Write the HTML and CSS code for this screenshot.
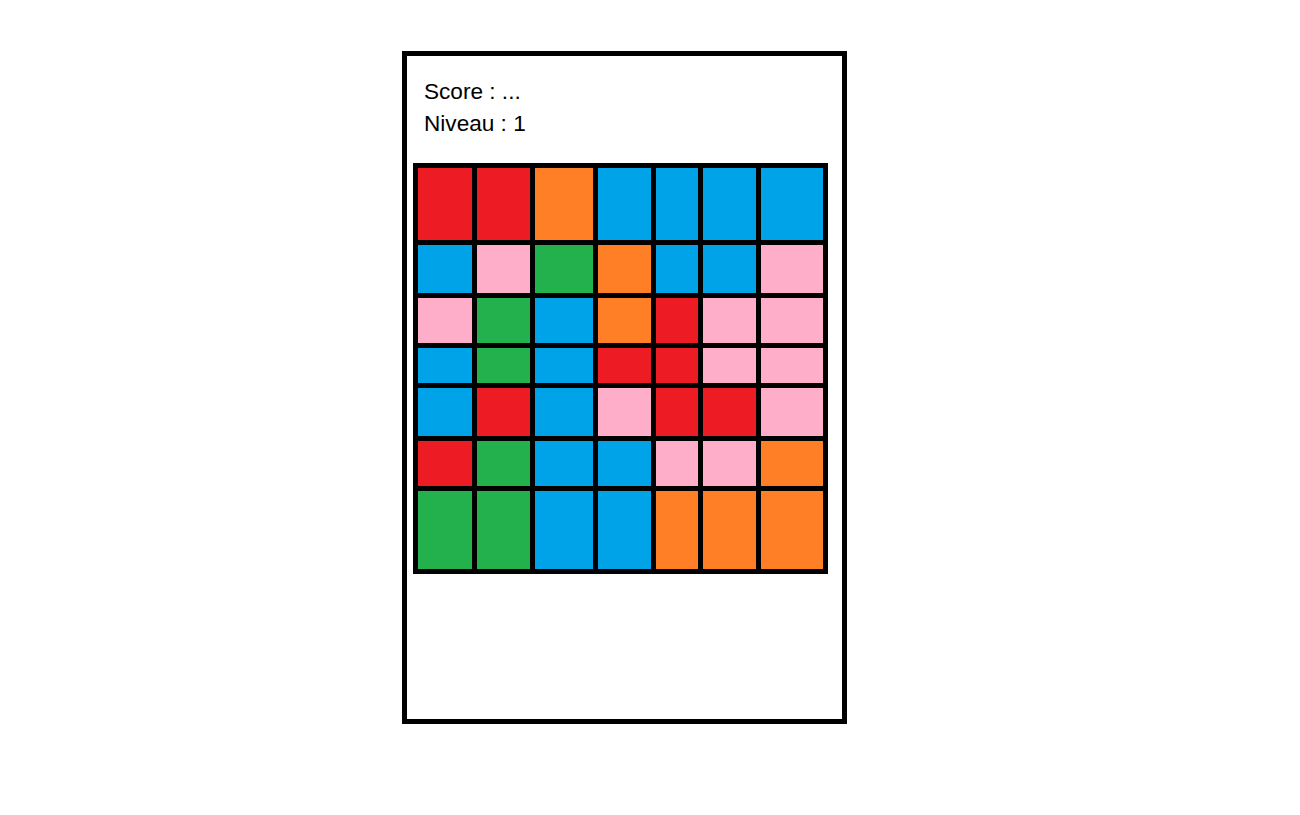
FILE: index.html
```html
<!DOCTYPE html>
<html lang="fr">
<head>
    <meta charset="UTF-8">
    <meta name="viewport" content="width=device-width, initial-scale=1.0">
    <title>Jeu</title>
    <link rel="stylesheet" href="styles.css">
</head>
<body>

    <div class="page">
        <div class="game">
            <div class="infos">
                <div>Score : ...</div>
                <div>Niveau : 1</div>
            </div>
            <div class="board">
                <div class="red"></div><div class="red"></div><div class="orange"></div><div class="blue"></div><div class="blue"></div><div class="blue"></div><div class="blue"></div>
                <div class="blue"></div><div class="pink"></div><div class="green"></div><div class="orange"></div><div class="blue"></div><div class="blue"></div><div class="pink"></div>
                <div class="pink"></div><div class="green"></div><div class="blue"></div><div class="orange"></div><div class="red"></div><div class="pink"></div><div class="pink"></div>
                <div class="blue"></div><div class="green"></div><div class="blue"></div><div class="red"></div><div class="red"></div><div class="pink"></div><div class="pink"></div>
                <div class="blue"></div><div class="red"></div><div class="blue"></div><div class="pink"></div><div class="red"></div><div class="red"></div><div class="pink"></div>
                <div class="red"></div><div class="green"></div><div class="blue"></div><div class="blue"></div><div class="pink"></div><div class="pink"></div><div class="orange"></div>
                <div class="green"></div><div class="green"></div><div class="blue"></div><div class="blue"></div><div class="orange"></div><div class="orange"></div><div class="orange"></div>
            </div>
        </div>
    </div>

</body>
</html>
```

FILE: styles.css
```css
body { margin: 0; background: white; font-family: "Liberation Sans", Arial, sans-serif; }
.page { padding: 51px 0 0 402px; }
.game { width: 435px; height: 663px; border: 5px solid black; box-sizing: content-box; }
.infos { height: 64px; padding: 20px 0 0 17px; font-size: 22.6px; line-height: 32px; color: black; }
.board { display: grid; grid-template-columns: 54px 53px 58px 53px 42px 53px 62px; grid-template-rows: 72px 48px 45px 35px 48px 45px 78px; gap: 5px; padding: 5px; background: black; width: max-content; margin: 23px 0 0 6px; }
.red { background: #ed1c24; }
.orange { background: #ff7f27; }
.blue { background: #00a2e8; }
.pink { background: #ffaec9; }
.green { background: #22b14c; }
```
